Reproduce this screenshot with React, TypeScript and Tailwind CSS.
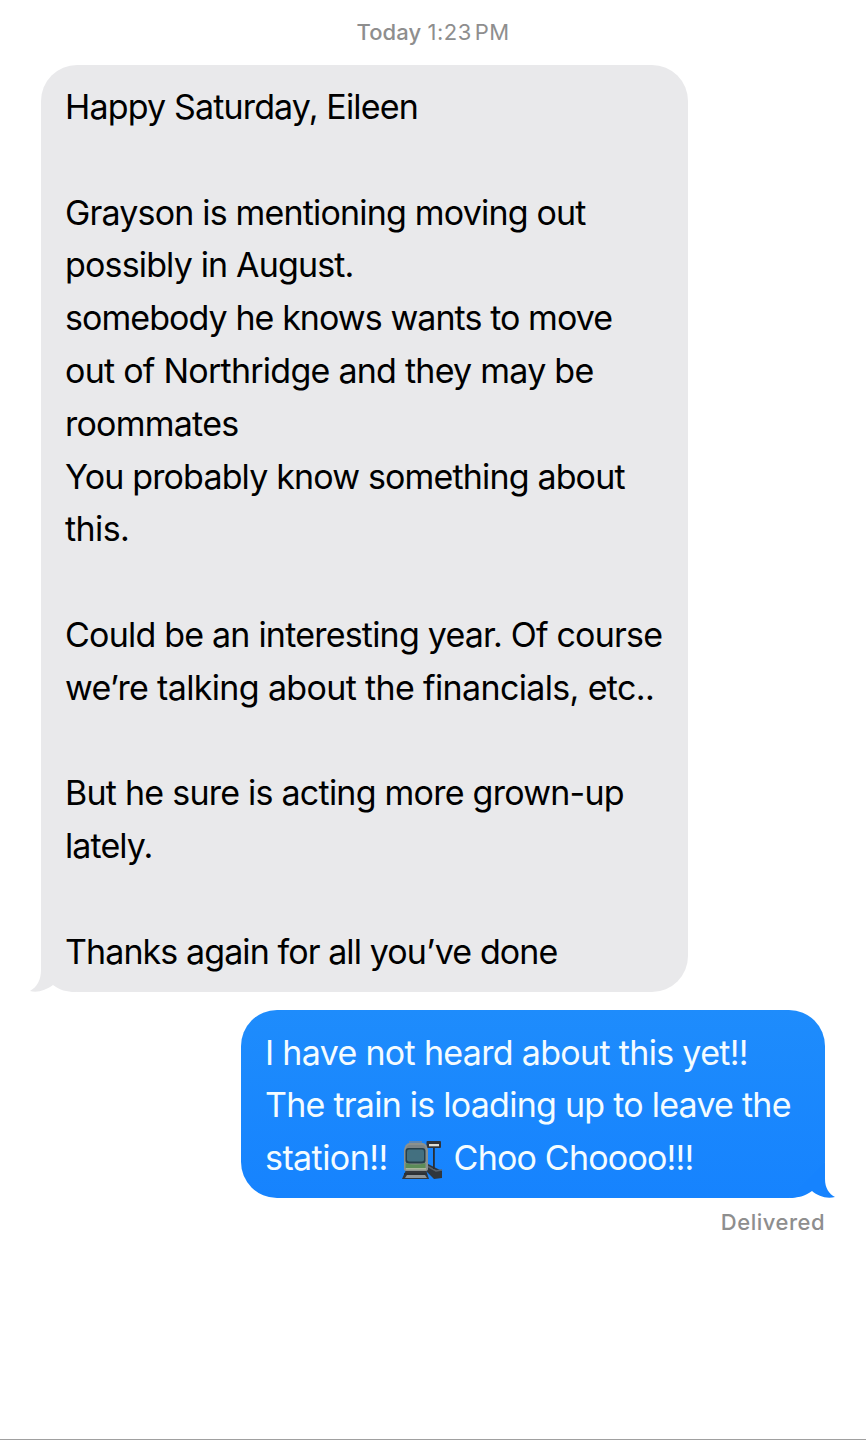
type Line = { text: string; tracking: string };

const incoming: Line[] = [
  { text: 'Happy Saturday, Eileen', tracking: 'tracking-[-0.84px]' },
  { text: '', tracking: '' },
  { text: 'Grayson is mentioning moving out', tracking: 'tracking-[-0.82px]' },
  { text: 'possibly in August.', tracking: 'tracking-[-0.84px]' },
  { text: 'somebody he knows wants to move', tracking: 'tracking-[-0.93px]' },
  { text: 'out of Northridge and they may be', tracking: 'tracking-[-0.75px]' },
  { text: 'roommates', tracking: 'tracking-[-0.76px]' },
  { text: 'You probably know something about', tracking: 'tracking-[-0.84px]' },
  { text: 'this.', tracking: 'tracking-[-0.6px]' },
  { text: '', tracking: '' },
  { text: 'Could be an interesting year. Of course', tracking: 'tracking-[-0.79px]' },
  { text: 'we’re talking about the financials, etc..', tracking: 'tracking-[-0.65px]' },
  { text: '', tracking: '' },
  { text: 'But he sure is acting more grown-up', tracking: 'tracking-[-0.76px]' },
  { text: 'lately.', tracking: 'tracking-[-0.9px]' },
  { text: '', tracking: '' },
  { text: 'Thanks again for all you’ve done', tracking: 'tracking-[-0.91px]' },
];

function Station() {
  return (
    <svg className="ml-[13px] mr-[11px] inline-block h-[40px] w-[42px] align-[-10px]" viewBox="0 0 42 40">
      <path d="M5 30L1 39h27l-3-9z" fill="#34383d" />
      <path d="M6 35h18L26 38H4z" fill="#8f9598" />
      <path d="M3 34h23" stroke="#2d3136" strokeWidth="1.8" />
      <path d="M25 23l16 8v7l-8 1-8-8z" fill="#30363c" />
      <path d="M26 26l9 5 6-1" fill="none" stroke="#59626a" strokeWidth="1.5" />
      <rect x="32" y="7" width="1.8" height="22" fill="#292f35" />
      <rect x="25.5" y="1" width="14.5" height="7" rx="1" fill="#30343a" />
      <rect x="28" y="4" width="10" height="2.3" fill="#e0ddd2" />
      <path d="M8 2h13" stroke="#7a8794" strokeWidth="1.5" />
      <path d="M3 10q1-6 5-7h14q4 1 5 7v19q0 2-3 2H6q-3 0-3-2z" fill="#8b918e" />
      <path d="M5 9q1-4 4-4h12q3 0 4 4z" fill="#7c8588" />
      <rect x="4.5" y="8" width="20" height="15.5" rx="3" fill="#263f49" />
      <rect x="6" y="9.5" width="17" height="12" rx="2" fill="#437080" />
      <path d="M4.5 23q10 3 20 0v5h-20z" fill="#5c8c58" />
      <path d="M5 28h20v1.5H5z" fill="#aab69b" />
    </svg>
  );
}

export default function App() {
  return (
    <main className="flex h-[1440px] w-[866px] flex-col border-b border-[#a0a0a0] bg-white font-['Inter',sans-serif]">
      <div className="flex h-[65px] justify-center pt-4 text-[22px] leading-[32px] text-[#8e8e8e]">
        <span className="whitespace-nowrap"><b className="font-medium tracking-[0.1px]">Today</b> <span className="tracking-[0.5px]">1:23</span><span className="ml-[3px] tracking-[0.4px]">PM</span></span>
      </div>
      <section className="relative ml-[41px] h-[927px] w-[647px] rounded-[36px] bg-[#e9e9eb] pl-6 pt-4 text-[34px] leading-[52.8px] text-black">
        <svg className="absolute bottom-0 -left-[11px] h-[52px] w-[46px]" viewBox="0 0 46 52">
          <path d="M11 0V30C11 40 7 47 0 51C8 53 16 50 23 45C30 50 36 52 46 52V0z" fill="#e9e9eb" />
        </svg>
        {incoming.map(({ text, tracking }, i) => (
          <p key={i} className={`relative h-[52.8px] whitespace-nowrap ${tracking}`}>{text}</p>
        ))}
      </section>
      <section className="relative ml-[241px] mt-[18px] h-[188px] w-[584px] rounded-[36px] bg-linear-to-b from-[#1e8cfc] to-[#1683fe] pl-6 pt-[16.6px] text-[34px] leading-[52.5px] text-[#f4fcff]">
        <svg className="absolute bottom-0 -right-[10px] h-[36px] w-[46px]" viewBox="0 0 46 36">
          <path d="M36 0V17C36 26 40 32 46 35C37 37 29 34 23 29C16 34 9 36 0 36z" fill="#1683fe" />
        </svg>
        <p className="relative h-[52.5px] whitespace-nowrap tracking-[-0.68px]">I have not heard about this yet!!</p>
        <p className="relative h-[52.5px] whitespace-nowrap tracking-[-0.75px]">The train is loading up to leave the</p>
        <p className="relative h-[52.5px] whitespace-nowrap tracking-[-0.8px]"><span className="tracking-[-0.57px]">station!!</span><Station />Choo Choooo!!!</p>
      </section>
      <div className="mr-[41px] mt-2 self-end text-[22px] font-medium leading-8 tracking-[0.5px] text-[#8e8e8e]">Delivered</div>
    </main>
  );
}
